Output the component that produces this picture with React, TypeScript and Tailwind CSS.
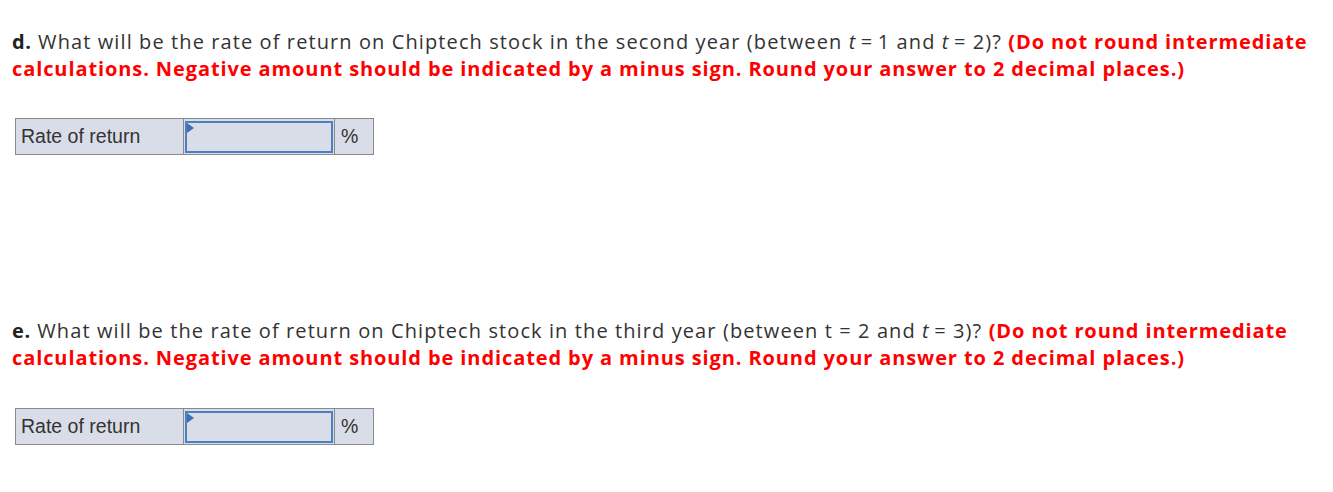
import React from "react";

function AnswerRow() {
  return (
    <table className="ml-[15px] border-collapse font-['Liberation_Sans',Arial,sans-serif] text-[19.5px] text-[#333]">
      <tbody>
        <tr className="h-[36px]">
          <td className="w-[168px] border border-[#8a8a8a] bg-[#d9dde8] pl-[5px] align-middle leading-none">
            Rate of return
          </td>
          <td className="w-[151px] border border-[#8a8a8a] bg-[#d9dde8] p-[1px] align-middle">
            <div className="relative h-[32px] w-full border-2 border-[#4d7fc4] bg-[#d9dde8]">
              <span className="absolute left-0 top-0 h-0 w-0 border-b-[5px] border-l-[7px] border-t-[5px] border-b-transparent border-l-[#3b6fb8] border-t-transparent" />
            </div>
          </td>
          <td className="w-[39px] border border-[#8a8a8a] bg-[#d9dde8] pl-[6px] align-middle leading-none">
            %
          </td>
        </tr>
      </tbody>
    </table>
  );
}

function Question({ letter, children }: { letter: string; children: React.ReactNode }) {
  return (
    <p className="whitespace-nowrap pl-[12px] text-[20px] leading-[27px] tracking-[1.1px] text-[#333]">
      <b className="font-bold tracking-[0.7px] text-[#222]">{letter}.</b> {children}{" "}
      <b className="font-bold tracking-[0.9px] text-[#ff0000]">(Do not round intermediate</b>
      <br />
      <b className="font-bold tracking-[0.9px] text-[#ff0000]">
        calculations. Negative amount should be indicated by a minus sign. Round your answer to 2 decimal places.)
      </b>
    </p>
  );
}

export default function App() {
  return (
    <div className="min-h-[492px] overflow-hidden bg-white pt-[28px] font-['Open_Sans','Noto_Sans',sans-serif]">
      <Question letter="d">
        What will be the rate of return on Chiptech stock in the second year (between <i>t</i>&thinsp;=&thinsp;1 and <i>t</i>&thinsp;= 2)?
      </Question>
      <div className="mt-[36px]">
        <AnswerRow />
      </div>
      <div className="mt-[162px]">
        <Question letter="e">
          What will be the rate of return on Chiptech stock in the third year (between t = 2 and <i>t</i>&thinsp;= 3)?
        </Question>
      </div>
      <div className="mt-[37px]">
        <AnswerRow />
      </div>
    </div>
  );
}
